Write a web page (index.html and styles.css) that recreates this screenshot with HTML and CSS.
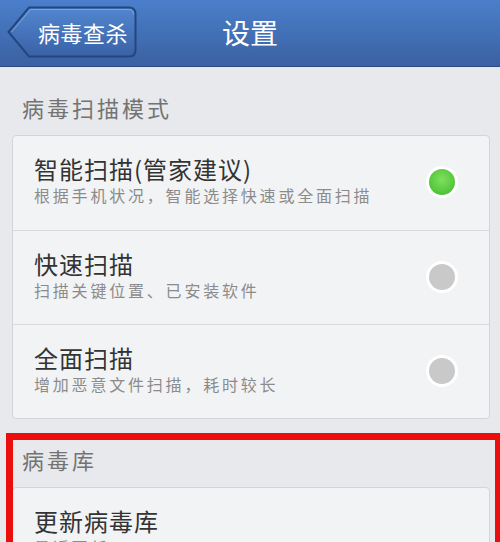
FILE: index.html
```html
<!DOCTYPE html>
<html lang="zh-CN">
<head>
    <meta charset="UTF-8">
    <meta name="viewport" content="width=device-width, initial-scale=1.0">
    <title>设置</title>
    <link rel="stylesheet" href="styles.css">
</head>
<body>
    <header class="topbar">
        <a href="#" class="back-btn">
            <svg class="back-shape" width="130" height="52" viewBox="0 0 130 52">
                <defs>
                    <linearGradient id="backFill" x1="0" y1="0" x2="0" y2="1">
                        <stop offset="0" stop-color="#5286cf"/>
                        <stop offset="1" stop-color="#3a62a6"/>
                    </linearGradient>
                </defs>
                <path d="M1.5,26 L22,1.5 H122 Q128.5,1.5 128.5,8 V44 Q128.5,50.5 122,50.5 H22 Z" fill="url(#backFill)" stroke="#23467f" stroke-width="2"/>
                <path d="M4.5,26 L23.5,3.5 H121.5 Q126.5,3.5 126.5,8.5" fill="none" stroke="#7fa5dc" stroke-width="1"/>
            </svg>
            <span>病毒查杀</span>
        </a>
        <div class="title">设置</div>
    </header>

    <div class="section-title">病毒扫描模式</div>
    <div class="card">
        <div class="row">
            <div class="row-text">
                <div class="row-name">智能扫描(管家建议)</div>
                <div class="row-desc">根据手机状况，智能选择快速或全面扫描</div>
            </div>
            <span class="radio on"></span>
        </div>
        <div class="row">
            <div class="row-text">
                <div class="row-name">快速扫描</div>
                <div class="row-desc">扫描关键位置、已安装软件</div>
            </div>
            <span class="radio"></span>
        </div>
        <div class="row">
            <div class="row-text">
                <div class="row-name">全面扫描</div>
                <div class="row-desc">增加恶意文件扫描，耗时较长</div>
            </div>
            <span class="radio"></span>
        </div>
    </div>

    <div class="virus-db">
        <div class="section-title">病毒库</div>
        <div class="card">
            <div class="row">
                <div class="row-text">
                    <div class="row-name">更新病毒库</div>
                    <div class="row-desc">最近更新：2013-05-20</div>
                </div>
            </div>
        </div>
        <!-- red highlight frame -->
        <div class="mark"></div>
    </div>
</body>
</html>
```

FILE: styles.css
```css
* {
    box-sizing: border-box;
    margin: 0;
    padding: 0;
}

body {
    background-color: #e8e9ec;
    font-family: "Noto Sans CJK SC", "Noto Sans", sans-serif;
    width: 500px;
    height: 542px;
    overflow: hidden;
}

.topbar {
    position: relative;
    height: 67px;
    background: linear-gradient(#4b7fcb, #3a61a2);
    border-bottom: 1px solid #2a4a82;
    display: flex;
    align-items: center;
    justify-content: center;
}

.back-btn {
    position: absolute;
    left: 7px;
    top: 6px;
    width: 130px;
    height: 52px;
    display: flex;
    align-items: center;
    padding-left: 31px;
    text-decoration: none;
}

.back-shape {
    position: absolute;
    left: 0;
    top: 0;
}

.back-btn span {
    position: relative;
    color: #fff;
    font-size: 22px;
    letter-spacing: 0.5px;
    line-height: 1;
}

.title {
    color: #fff;
    font-size: 28px;
    line-height: 1;
    margin-top: -2px;
}

.section-title {
    padding: 26px 0 0 22px;
    height: 68px;
    font-size: 22px;
    line-height: 28px;
    letter-spacing: 3px;
    color: #737373;
}

.card {
    margin: 0 10px 0 12px;
    background: #f2f3f5;
    border: 1px solid #d4d5d8;
    border-radius: 4px;
}

.row {
    height: 94px;
    display: flex;
    align-items: center;
    padding: 0 31px 6px 21px;
    border-top: 1px solid #d8d9dc;
}

.row:first-child {
    border-top: none;
}

.row-text {
    flex: 1;
}

.row-name {
    font-size: 24px;
    line-height: 30px;
    letter-spacing: 1px;
    color: #333;
}

.row-desc {
    font-size: 16px;
    line-height: 22px;
    letter-spacing: 2.8px;
    color: #8b8b8b;
}

.radio {
    width: 32px;
    height: 32px;
    border-radius: 50%;
    background: #fff;
    padding: 3px;
    display: block;
    margin-top: 4px;
}

.radio::after {
    content: "";
    display: block;
    width: 26px;
    height: 26px;
    border-radius: 50%;
    background: #c9c9c9;
}

.radio.on::after {
    background: radial-gradient(circle at 50% 40%, #7ee05e, #52c43a 70%, #4aa834);
}

.virus-db {
    position: relative;
}

.mark {
    position: absolute;
    top: 14px;
    left: 6px;
    right: -2px;
    bottom: -60px;
    border: 7px solid #ec0d0d;
}
```
